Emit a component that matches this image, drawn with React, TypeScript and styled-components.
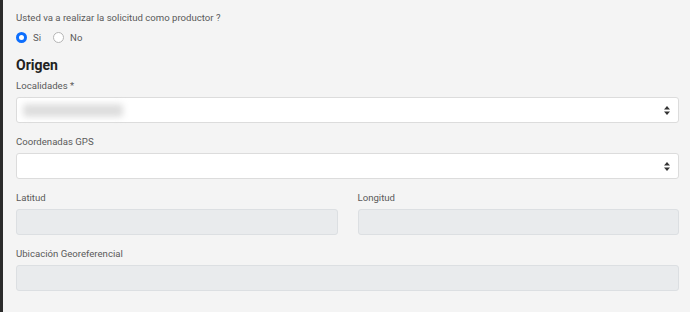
import React from 'react';
import styled, { createGlobalStyle } from 'styled-components';

const GlobalStyle = createGlobalStyle`
  html, body {
    margin: 0;
    padding: 0;
    background: #f4f4f4;
    font-family: Roboto, "Liberation Sans", sans-serif;
  }
`;

const Page = styled.div`
  box-sizing: border-box;
  min-height: 312px;
  border-left: 3px solid #2b2b2b;
  padding: 11px 11px 0 13px;
  color: #444;
`;

const Question = styled.div`
  font-size: 9.6px;
  line-height: 14px;
  color: #5a5a5a;
`;

const RadioRow = styled.div`
  display: flex;
  align-items: center;
  gap: 12px;
  margin-top: 7px;
`;

const RadioOption = styled.label`
  display: flex;
  align-items: center;
  gap: 6px;
  font-size: 9.6px;
  color: #5a5a5a;
`;

const RadioDot = styled.span<{ checked?: boolean }>`
  box-sizing: border-box;
  width: 11px;
  height: 11px;
  border-radius: 50%;
  background: #fff;
  border: ${p => (p.checked ? '3px solid #0d6efd' : '1px solid #b5b5b5')};
`;

const Heading = styled.h2`
  margin: 13px 0 5px;
  font-size: 14px;
  line-height: 18px;
  font-weight: 700;
  color: #222;
`;

const Field = styled.div`
  margin-bottom: 12px;
`;

const Label = styled.div`
  font-size: 9.6px;
  line-height: 13px;
  color: #5a5a5a;
  margin-bottom: 5px;
`;

const Select = styled.div`
  box-sizing: border-box;
  height: 26px;
  background: #fff;
  border: 1px solid #dcdcdc;
  border-radius: 3px;
  display: flex;
  align-items: center;
  justify-content: space-between;
  padding: 0 8px 0 4px;
`;

const Blurred = styled.span`
  display: block;
  width: 100px;
  height: 13px;
  margin-left: 2px;
  background: #dedede;
  border-radius: 3px;
  filter: blur(3px);
`;

const Disabled = styled.div`
  box-sizing: border-box;
  height: 26px;
  background: #e9ebed;
  border: 1px solid #dcdfe2;
  border-radius: 3px;
`;

const Row = styled.div`
  display: grid;
  grid-template-columns: 1fr 1fr;
  column-gap: 20px;
`;

const Arrows = () => (
  <svg width="6" height="9" viewBox="0 0 6 9">
    <path d="M3 0 L6 3.5 H0 Z" fill="#333" />
    <path d="M3 9 L6 5.5 H0 Z" fill="#333" />
  </svg>
);

export default function App() {
  return (
    <>
      <GlobalStyle />
      <Page>
        <Question>Usted va a realizar la solicitud como productor ?</Question>
        <RadioRow>
          <RadioOption>
            <RadioDot checked />
            Si
          </RadioOption>
          <RadioOption>
            <RadioDot />
            No
          </RadioOption>
        </RadioRow>
        <Heading>Origen</Heading>
        <Field>
          <Label>Localidades *</Label>
          <Select>
            <Blurred />
            <Arrows />
          </Select>
        </Field>
        <Field>
          <Label>Coordenadas GPS</Label>
          <Select>
            <span />
            <Arrows />
          </Select>
        </Field>
        <Row>
          <Field>
            <Label>Latitud</Label>
            <Disabled />
          </Field>
          <Field>
            <Label>Longitud</Label>
            <Disabled />
          </Field>
        </Row>
        <Field>
          <Label>Ubicación Georeferencial</Label>
          <Disabled />
        </Field>
      </Page>
    </>
  );
}
